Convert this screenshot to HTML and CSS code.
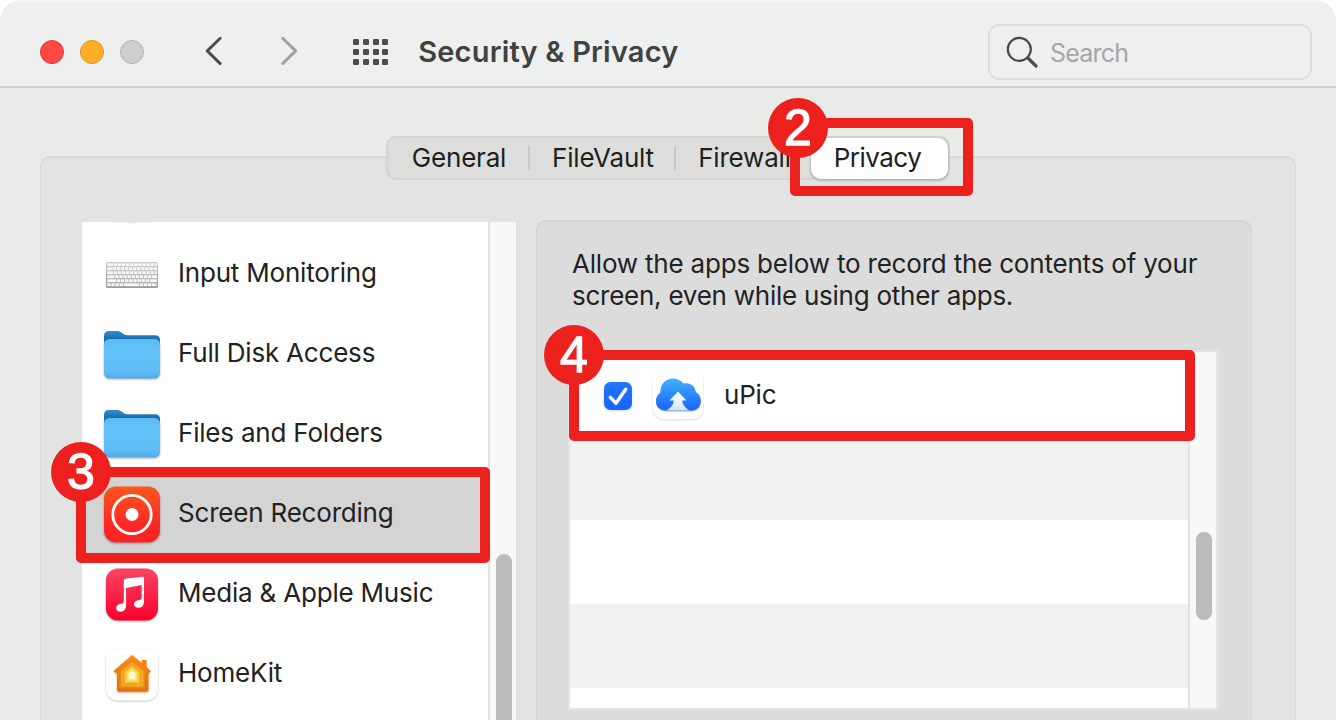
FILE: index.html
```
<!DOCTYPE html>
<html lang="en">
<head>
<meta charset="utf-8">
<title>Security &amp; Privacy</title>
<link rel="stylesheet" href="styles.css">
</head>
<body>
<div class="window">
  <header class="toolbar">
    <div class="lights"><span class="light close"></span><span class="light minimize"></span><span class="light zoom"></span></div>
    <div class="nav">
      <svg width="18" height="30" viewBox="0 0 18 30"><path d="M15.2 2.200 2.200 14.900 15.200 27.600" fill="none" stroke="#4c4d4c" stroke-width="2.900" stroke-linecap="round" stroke-linejoin="round"/></svg>
      <svg width="18" height="30" viewBox="0 0 18 30"><path d="M2.700 2.200 15.700 14.900 2.700 27.600" fill="none" stroke="#a0a1a0" stroke-width="2.900" stroke-linecap="round" stroke-linejoin="round"/></svg>
    </div>
    <div class="grid-icon"><i></i><i></i><i></i><i></i><i></i><i></i><i></i><i></i><i></i><i></i><i></i><i></i></div>
    <h1 class="title">Security &amp; Privacy</h1>
    <div class="search">
      <svg width="34" height="34" viewBox="0 0 34 34" fill="none" stroke="#4a4b4a"><circle cx="14.3" cy="14.3" r="11.500" stroke-width="2.200"/><path d="M22.800 22.800 31 31" stroke-width="3.200" stroke-linecap="round"/></svg>
      <span>Search</span>
    </div>
  </header>

  <main class="content">
    <nav class="tabs">
      <span class="tab general">General</span>
      <span class="tab filevault">FileVault</span>
      <span class="tab firewall">Firewall</span>
      <span class="tab active">Privacy</span>
    </nav>
    <section class="panel">
      <div class="sidebar">
        <ul class="services">
          <li><svg class="icon" viewBox="0 0 60 60"><defs><linearGradient id="kb" x2="0" y2="1"><stop stop-color="#c9c9c9"/><stop offset="1" stop-color="#999"/></linearGradient></defs>
            <ellipse cx="30" cy="-22.400" rx="21" ry="1.700" fill="#ebebeb"/>
            <rect x="4" y="18" width="52" height="26" rx="1.500" fill="url(#kb)"/>
            <g stroke="#f7f7f7" stroke-width="2.900"><path d="M5.200 20.800H55" stroke-dasharray="5.800 .7 3.400 .7 3.400 .7 3.400 .7 3.400 .7 3.400 .7 3.400 .7 3.400 .7 3.400 .7 3.400 .7 3.400 .7 9"/><path d="M5.200 24.800H55" stroke-dasharray="4.600 .7 3.400 .7 3.400 .7 3.400 .7 3.400 .7 3.400 .7 3.400 .7 3.400 .7 3.400 .7 3.400 .7 3.400 .7 9"/><path d="M5.200 28.800H55" stroke-dasharray="5.800 .7 3.400 .7 3.400 .7 3.400 .7 3.400 .7 3.400 .7 3.400 .7 3.400 .7 3.400 .7 3.400 .7 3.400 .7 9"/><path d="M5.200 32.800H55" stroke-dasharray="7.300 .7 3.400 .7 3.400 .7 3.400 .7 3.400 .7 3.400 .7 3.400 .7 3.400 .7 3.400 .7 3.400 .7 9"/><path d="M5.200 36.800H55" stroke-dasharray="9 .7 3.400 .7 3.400 .7 3.400 .7 3.400 .7 3.400 .7 3.400 .7 3.400 .7 3.400 .7 9 .7"/><path d="M5.200 40.700H55" stroke-dasharray="3.400 .7 3.400 .7 3.400 .7 3.400 .7 15.500 .7 3.400 .7 3.400 .7 3.400 .7 3.400 .7"/></g></svg><span>Input Monitoring</span></li>
          <li><svg class="icon" viewBox="0 0 60 60"><use href="#folder"/></svg><span>Full Disk Access</span></li>
          <li><svg class="icon raised" viewBox="0 0 60 60"><use href="#folder"/></svg><span>Files and Folders</span></li>
          <li class="selected"><svg class="icon" viewBox="0 0 60 60"><defs><linearGradient id="rec" x2="0" y2="1"><stop stop-color="#fc561e"/><stop offset=".75" stop-color="#ff2424"/></linearGradient></defs><rect class="shade" x="2" y="2.500" width="56" height="56" rx="12" fill="url(#rec)"/><circle cx="30" cy="30.500" r="19.200" fill="none" stroke="#fff" stroke-width="2.800"/><circle cx="30" cy="30.500" r="6.500" fill="#fff"/></svg><span>Screen Recording</span></li>
          <li><svg class="icon" viewBox="0 0 60 60"><defs><linearGradient id="music" x2="0" y2="1"><stop stop-color="#f94663"/><stop offset="1" stop-color="#f9002d"/></linearGradient></defs><rect class="shade" x="4" y="4.500" width="52" height="52" rx="12" fill="url(#music)"/><path d="M21.800 17.600c0-1.800.5-2.600 2.200-3L40 12.900c1.500-.3 2 .2 2 1.600V37c0 4.200-1.800 6.600-5 6.800-3 .2-5-1.200-5-3.200 0-2.800 2-4 5-4.600 2-.4 2.700-.8 2.700-2.800V20.900L24.100 24.100V40.500c0 4.500-1.800 7-5 7.200-3 .2-5-1.300-5-3.400 0-2.700 2-4 4.700-4.600 2.300-.5 3-.9 3-2.800z" fill="#fff"/></svg><span>Media &amp; Apple Music</span></li>
          <li><svg class="icon" viewBox="0 0 60 60"><defs><linearGradient id="home" x2="0" y2="1"><stop stop-color="#fb8a16"/><stop offset="1" stop-color="#dd7010"/></linearGradient></defs><rect class="tile" x="4" y="4.500" width="52" height="52" rx="12" fill="#fff"/><g class="house"><path d="M30 11 40 19V16h4.500v7L49 27.300 46.500 29.500V46q0 1.700-1.700 1.700H16.600Q15 47.700 15 46V29.500L11.300 27.200z" fill="url(#home)"/><path d="M30 15 43 25.800V44.500H17.500V25.800z" fill="#e98712"/><path d="M30 17.800 41.500 27.500V42.500H19V27.500z" fill="#f7a824"/><path d="M30 20 39 28V40.500H21.300V28z" fill="#eda222"/><path d="M30 21.500 37.700 28.500V39H22.700V28.500z" fill="#fcc640"/><path d="M30 24 35.500 29V37.200H24.700V29z" fill="#f9e060"/><path d="M30 26.300 33.500 29.800V35.300H26.700V29.800z" fill="#fffacb"/></g></svg><span>HomeKit</span></li>
        </ul>
        <div class="track"><div class="thumb"></div></div>
      </div>
      <div class="group">
        <p class="hint">Allow the apps below to record the contents of your<br><span>screen, even while using other apps.</span></p>
        <div class="table">
          <div class="rows">
            <div class="row">
              <svg class="check" width="28" height="28" viewBox="0 0 28 28"><defs><linearGradient id="ck" x2="0" y2="1"><stop stop-color="#1d78ff"/><stop offset="1" stop-color="#1d61fa"/></linearGradient></defs><rect width="28" height="28" rx="6.500" fill="url(#ck)"/><path d="M6.300 15.400 12 21.200 21.700 7.200" fill="none" stroke="#fff" stroke-width="3.400" stroke-linecap="round" stroke-linejoin="round"/></svg>
              <svg class="app" width="54" height="54" viewBox="0 0 54 54"><defs><linearGradient id="cl" x2="0" y2="1"><stop stop-color="#42b0fa"/><stop offset="1" stop-color="#1765ff"/></linearGradient><linearGradient id="ar" x2="0" y2="1"><stop stop-color="#fff"/><stop offset="1" stop-color="#d3e6f8"/></linearGradient></defs><rect class="tile" x="2" y="1" width="50" height="50" rx="11" fill="#fff"/><path class="cloudshade" d="M16 42.500C9 42.500 5 38.500 5 33c0-4 2-7 4.600-8.500C9 16 15 10.500 22 10.500c4.500 0 8.300 2 10.500 5 7-1.500 11.500 2.500 12.300 8.500 3 1.500 5 5 5 9 0 5.500-4 9.500-10 9.500z" fill="url(#cl)"/><path d="M27 23.500 35.500 32.500H31.300C31.500 37 34 39.500 38.500 42.500H15.500C20 39.500 22.500 37 22.700 32.500H18.500z" fill="url(#ar)"/></svg>
              <span>uPic</span>
            </div>
            <div class="row"></div><div class="row"></div><div class="row"></div><div class="row"></div>
          </div>
          <div class="track"><div class="thumb"></div></div>
        </div>
      </div>
    </section>
  </main>
</div>

<div class="callout step2"><b>2</b></div>
<div class="callout step3"><b>3</b></div>
<div class="callout step4"><b>4</b></div>

<svg class="defs" width="0" height="0"><defs>
  <linearGradient id="fback" x2="0" y2="1"><stop stop-color="#328dca"/><stop offset=".3" stop-color="#1c70b4"/></linearGradient>
  <linearGradient id="ffront" x2="0" y2="1"><stop stop-color="#5ebcf5"/><stop offset=".25" stop-color="#62c1f9"/><stop offset=".8" stop-color="#61bdf6"/><stop offset="1" stop-color="#51abe5"/></linearGradient>
  <g id="folder"><path d="M2 20V12q0-5 5-5h8.500c4 0 5 4.200 10 4.200H53q5 0 5 5V30H2z" fill="url(#fback)"/><rect class="shade" x="2" y="15" width="56" height="39.500" rx="5.500" fill="url(#ffront)"/></g>
</defs></svg>
</body>
</html>
```
FILE: styles.css
```
* { box-sizing: border-box; }
html, body { margin: 0; width: 1336px; height: 720px; overflow: hidden; background: #fff; }
body { position: relative; font-family: Inter, "Liberation Sans", sans-serif; font-size: 26px; letter-spacing: -.2px; color: #222; }
svg { display: block; flex: none; }
.defs { position: absolute; }
.window { display: flex; flex-direction: column; height: 720px; background: #e9ebe8; border-radius: 21px 21px 0 0; overflow: hidden; }

.toolbar { display: flex; align-items: center; flex: none; height: 88px; padding: 15px 24px 0 40px; background: #eef0ef; border-bottom: 2px solid #cdcece; box-shadow: inset 0 2px #f5f7f6; }
.lights { display: flex; gap: 16px; margin-top: 2px; }
.light { width: 24px; height: 24px; border-radius: 50%; border: 1px solid; }
.close { background: #ff4745; border-color: #df3538; }
.minimize { background: #fdae25; border-color: #dd9221; }
.zoom { background: #cdcfce; border-color: #afb1b0; }
.nav { display: flex; gap: 57px; margin-left: 61px; }
.grid-icon { display: grid; grid-template-columns: repeat(4, 6px); gap: 4px; column-gap: 3.800px; margin-left: 55px; margin-top: 2px; }
.grid-icon i { height: 6px; border-radius: 1.200px; background: #4c4d4c; }
.title { margin: 1px 0 0 29.800px; font-size: 29px; font-weight: 600; letter-spacing: .2px; color: #404140; white-space: nowrap; }
.search { display: flex; align-items: center; width: 324px; height: 56px; margin: 2px 0 0 auto; padding-left: 15px; border: 2px solid #dddfde; border-radius: 11px; color: #a5a6a5; font-size: 25px; letter-spacing: -.8px; }
.search span { margin: 3px 0 0 11px; }

.content { flex: 1; display: flex; flex-direction: column; padding: 48px 40px 0; }
.tabs { z-index: 1; align-self: flex-start; display: flex; align-items: center; width: 564px; height: 44px; margin-left: 346px; background: #dddedc; border: 2px solid #d4d5d3; border-radius: 10px; color: #1e1e1e; }
.tab { display: flex; align-items: center; justify-content: center; height: 24px; padding-bottom: 2px; white-space: nowrap; }
.general { width: 142px; padding-left: 2px; border-right: 2px solid #c8c9c8; }
.filevault { width: 146px; padding-left: 2px; border-right: 2px solid #c8c9c8; }
.firewall { width: 135px; padding-left: 2px; }
.active { width: 137px; height: 41px; background: #fff; border-radius: 10px; box-shadow: 0 1px 2px 1px #b7b7b7; padding-right: 4px; letter-spacing: -.500px; }
.panel { flex: 1; display: flex; align-items: flex-start; gap: 18px; margin-top: -24px; padding: 62px 43px 0 41px; background: #e3e3e3; border: solid #d8d9d8; border-width: 2px 1px 0; border-radius: 10px 10px 0 0; }

.sidebar { display: flex; width: 436px; height: 502px; margin-top: 2px; background: #fff; border-right: 2px solid #e0e0e0; overflow: hidden; }
.services { flex: 1; margin: 0; padding: 12px 0 0; list-style: none; }
.services li { display: flex; align-items: center; height: 80px; padding-left: 20px; }
.services .selected { background: #d4d4d4; }
.services span { margin: -4px 0 0 16px; white-space: nowrap; }
.icon { width: 60px; height: 60px; overflow: visible; }
.raised { margin-top: -2px; }
.shade { filter: drop-shadow(0 1px 1px rgba(0,0,0,.3)); }
.tile { filter: drop-shadow(0 1px 1px rgba(0,0,0,.22)); }
.house { filter: drop-shadow(0 1px 1px rgba(165,80,0,.45)); }
.cloudshade { filter: drop-shadow(0 1px .5px rgba(0,0,0,.35)); }
.app .tile { filter: drop-shadow(0 1px .8px rgba(0,0,0,.15)); }
.track { width: 28px; background: #f8f8f8; border-left: 2px solid #e2e2e2; padding-left: 6px; }
.thumb { width: 16px; border-radius: 8px; background: #bbb; }
.sidebar .thumb { height: 200px; margin-top: 332px; }

.group { width: 716px; height: 502px; padding: 26px 32px 0 31px; background: #dcdcdc; border: 1px solid #d3d3d3; border-top-width: 2px; border-bottom: 0; border-radius: 10px 10px 0 0; }
.hint { margin: 0; padding-left: 4px; height: 102px; line-height: 32px; white-space: nowrap; }
.hint span { letter-spacing: -.250px; }
.table { display: flex; width: 651px; height: 360px; border: solid #e4e4e4; border-width: 2px 3px 2px 2px; background: #fff; overflow: hidden; }
.rows { flex: 1; overflow: hidden; }
.row { display: flex; align-items: center; height: 84px; padding-left: 34px; }
.row:nth-child(even) { background: #f0f2f1; }
.check { margin-top: 4px; filter: drop-shadow(0 1px 1px rgba(29,97,250,.25)); }
.app { margin: 2px 19px 0 19px; overflow: visible; }
.table .thumb { height: 88px; margin-top: 180px; }

/* Numbered step markers laid over the window */
.callout { position: absolute; z-index: 2; border: 10px solid #ec201d; border-radius: 5px; }
.callout b { position: absolute; left: -32px; top: -30px; display: flex; align-items: center; justify-content: center; width: 60px; height: 60px; border-radius: 50%; background: #ec201d; color: #fff; font: 400 50px "Liberation Sans", sans-serif; letter-spacing: 0; -webkit-text-stroke: 1.300px #fff; }
.step2 { left: 790px; top: 118px; width: 183px; height: 78px; }
.step3 { left: 76px; top: 467px; width: 414px; height: 96px; }
.step4 { left: 569px; top: 350px; width: 626px; height: 91px; }
.callout.step3 b, .callout.step4 b { left: -35px; top: -35px; }
```
